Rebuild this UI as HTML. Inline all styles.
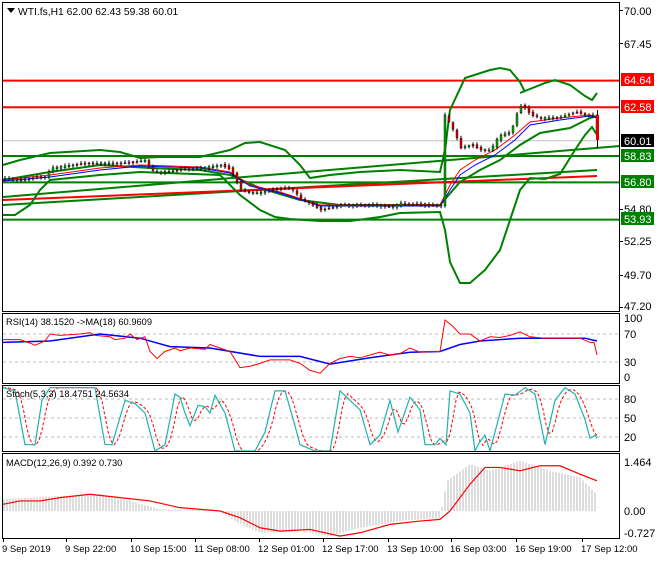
<!DOCTYPE html><html><head><meta charset="utf-8"><style>
body{margin:0;background:#fff;width:660px;height:560px;overflow:hidden;font-family:"Liberation Sans",sans-serif}
svg text{font-family:"Liberation Sans",sans-serif}
</style></head><body>
<svg id="s" width="660" height="560" xmlns="http://www.w3.org/2000/svg">
<rect width="660" height="560" fill="#fff"/>
<g id="g"></g>
<g fill="none" stroke="#000" stroke-width="1">
<rect x="2.5" y="2.5" width="617" height="309"/>
<rect x="2.5" y="313.5" width="617" height="70"/>
<rect x="2.5" y="385.5" width="617" height="66"/>
<rect x="2.5" y="453.5" width="617" height="85"/>
</g>
<path d="M7 8h8l-4 5z" fill="#000"/>
<text x="18" y="15" font-size="10.3" fill="#000">WTI.fs,H1  62.00 62.43 59.38 60.01</text>
<text x="6" y="325" font-size="9.3" fill="#000">RSI(14) 38.1520  -&gt;MA(18) 60.9609</text>
<text x="6" y="397" font-size="9.3" fill="#000">Stoch(5,3,3) 18.4751 24.5634</text>
<text x="6" y="466" font-size="9.3" fill="#000">MACD(12,26,9) 0.392 0.730</text>
<g font-size="11" fill="#000">
<text x="624" y="15">70.00</text><text x="624" y="48">67.45</text>
<text x="624" y="213">54.80</text><text x="624" y="245">52.25</text>
<text x="624" y="279">49.70</text><text x="624" y="310">47.20</text>
<text x="624" y="322">100</text><text x="624" y="338">70</text><text x="624" y="366">30</text><text x="624" y="381">0</text>
<text x="624" y="403">80</text><text x="624" y="422">50</text><text x="624" y="441">20</text>
<text x="624" y="466">1.464</text><text x="624" y="515">0.00</text><text x="624" y="537">-0.727</text>
</g>
<g fill="#000"><rect x="620" y="10" width="3" height="1"/><rect x="620" y="43" width="3" height="1"/><rect x="620" y="209" width="3" height="1"/><rect x="620" y="241" width="3" height="1"/><rect x="620" y="275" width="3" height="1"/><rect x="620" y="307" width="3" height="1"/></g>
<g font-size="11">
<rect x="621" y="73" width="33" height="13" fill="#f00"/><text x="624" y="84" fill="#fff">64.64</text>
<rect x="621" y="100" width="33" height="13" fill="#f00"/><text x="624" y="111" fill="#fff">62.58</text>
<rect x="621" y="134" width="33" height="13" fill="#000"/><text x="624" y="145" fill="#fff">60.01</text>
<rect x="621" y="149" width="33" height="13" fill="#008000"/><text x="624" y="160" fill="#fff">58.83</text>
<rect x="621" y="175" width="33" height="13" fill="#008000"/><text x="624" y="186" fill="#fff">56.80</text>
<rect x="621" y="212" width="33" height="13" fill="#008000"/><text x="624" y="223" fill="#fff">53.93</text>
</g>
<g font-size="9.5" fill="#000">
<text x="2" y="552">9 Sep 2019</text><text x="65" y="552">9 Sep 22:00</text><text x="130" y="552">10 Sep 15:00</text>
<text x="194" y="552">11 Sep 08:00</text><text x="258" y="552">12 Sep 01:00</text><text x="322" y="552">12 Sep 17:00</text>
<text x="387" y="552">13 Sep 10:00</text><text x="450" y="552">16 Sep 03:00</text><text x="515" y="552">16 Sep 19:00</text><text x="581" y="552">17 Sep 12:00</text>
</g>
<g fill="#000"><rect x="3" y="539" width="1" height="3"/><rect x="66" y="539" width="1" height="3"/><rect x="131" y="539" width="1" height="3"/><rect x="195" y="539" width="1" height="3"/><rect x="259" y="539" width="1" height="3"/><rect x="323" y="539" width="1" height="3"/><rect x="388" y="539" width="1" height="3"/><rect x="451" y="539" width="1" height="3"/><rect x="516" y="539" width="1" height="3"/><rect x="582" y="539" width="1" height="3"/></g>
</svg>
<script>
var g=document.getElementById('g'),NS='http://www.w3.org/2000/svg';
function el(t,a){var e=document.createElementNS(NS,t);for(var k in a)e.setAttribute(k,a[k]);g.appendChild(e);return e}
function P(pts,c,w,extra){var a={points:pts.map(function(p){return p[0]+','+p[1]}).join(' '),fill:'none',stroke:c,'stroke-width':w||1};for(var k in extra)a[k]=extra[k];el('polyline',a)}
function pr(a){var r=[];for(var i=0;i<a.length;i+=2)r.push([a[i],a[i+1]]);return r}
function interp(pts,x){for(var i=1;i<pts.length;i++){if(x<=pts[i][0]){var a=pts[i-1],b=pts[i];return a[1]+(b[1]-a[1])*(x-a[0])/(b[0]-a[0]||1)}}return pts[pts.length-1][1]}
function H(y,c,w){el('line',{x1:3,x2:620,y1:y,y2:y,stroke:c,'stroke-width':w})}
H(140.7,'#c0c0c0',1);H(80.6,'#f00',2);H(107.3,'#f00',2);
H(156,'#008000',2);H(182.4,'#008000',2);H(219.6,'#008000',2);
el('line',{x1:3,y1:197,x2:620,y2:146,stroke:'#008000','stroke-width':2});
el('line',{x1:3,y1:205,x2:597,y2:170,stroke:'#008000','stroke-width':2});
el('line',{x1:3,y1:200,x2:597,y2:176,stroke:'#f00','stroke-width':2});
var up=pr([3,165,20,160,50,153,100,150,120,152,140,158,160,157,200,157,230,150,245,143,260,142,285,150,300,165,310,178,330,175,360,172,400,170,440,172,445,150,450,110,465,78,490,70,500,68,510,70,520,82,525,92]);
P(up,'#008000',2);
P(pr([520,93,545,83,555,80,570,85,585,96,592,100,597,93]),'#008000',2);
var lo=pr([3,215,15,215,30,205,40,190,50,180,100,175,140,172,220,175,240,195,260,210,275,217,290,219,320,221,350,221,380,217,400,213,440,212,445,230,450,262,460,283,470,283,485,270,500,250,510,220,520,190,530,178,545,179,560,174,575,150,585,135,592,127,597,135]);
P(lo,'#008000',2);
P(pr([3,180,50,172,100,165,150,168,200,170,230,175,260,188,300,200,340,205,400,205,440,205,460,182,480,170,500,160,520,145,540,133,570,128,590,118,597,116]),'#008000',2);
var px=pr([3,178,20,180,45,177,50,168,70,165,100,163,130,163,145,160,150,170,160,172,200,168,220,165,230,170,240,190,255,193,270,190,290,188,300,198,320,210,330,208,340,205,360,205,390,207,400,203,430,206,440,205,444,115,450,125,457,140,460,148,470,145,480,150,490,150,495,140,500,135,510,132,518,108,522,105,530,115,540,118,560,117,575,112,585,115,594,115,597,140]);
P(pr([3,180,50,175,100,168,140,165,200,167,230,172,250,185,280,192,320,205,360,205,440,205,450,185,460,170,475,160,495,150,515,135,530,122,560,118,590,115,597,117]),'#f00',1);
P(pr([3,181,50,177,100,170,140,166,200,168,230,173,250,186,280,193,320,206,360,206,440,206,450,190,460,175,475,165,495,155,515,140,530,125,560,120,590,116,597,118]),'#00f',1);
for(var x=4;x<=596;x+=4){var c=interp(px,x),o=interp(px,x-4)+(Math.sin(x*1.7)*1.2);var t=Math.min(o,c),b=Math.max(o,c);
el('line',{x1:x+1,x2:x+1,y1:t-1-Math.abs(Math.sin(x))*1.5,y2:b+1+Math.abs(Math.cos(x))*1.5,stroke:'#000','stroke-width':1});
el('rect',{x:x,y:t,width:2,height:Math.max(1,b-t),fill:c>o?'#d00':'#0a0',stroke:'#000','stroke-width':0.4});}
el('line',{x1:597.5,x2:597.5,y1:110,y2:148,stroke:'#000'});el('rect',{x:596,y:115,width:3,height:25,fill:'#d00'});
function ry(v){return 383-0.7*v}
el('line',{x1:3,x2:620,y1:334,y2:334,stroke:'#bbb','stroke-dasharray':'3,3'});
el('line',{x1:3,x2:620,y1:362,y2:362,stroke:'#bbb','stroke-dasharray':'3,3'});
function mp(a,f){return pr(a).map(function(p){return [p[0],f(p[1])]})}
P(mp([3,58,50,60,100,70,140,64,170,52,210,50,260,38,300,38,330,27,370,36,410,44,440,45,460,55,480,60,520,64,585,64,597,60],ry),'#00f',1.5);
P(mp([3,62,20,62,30,57,35,54,45,60,50,70,60,68,80,70,90,72,95,68,110,66,115,62,125,64,130,70,137,62,145,66,150,45,157,35,165,45,175,50,180,46,190,50,205,48,210,55,220,50,230,45,240,22,250,24,260,28,270,33,290,33,300,28,310,18,320,14,330,28,340,35,350,38,360,36,370,40,380,44,390,40,400,42,410,50,420,44,430,45,440,45,445,90,452,82,460,70,470,70,480,60,490,66,500,65,510,68,520,73,530,66,545,64,560,64,580,64,590,58,594,58,597,40],ry),'#f00',1);
function sy(v){return 451-0.633*v}
[399,418,437].forEach(function(y){el('line',{x1:3,x2:620,y1:y,y2:y,stroke:'#bbb','stroke-dasharray':'3,3'})});
var K=[3,100,15,95,25,10,35,10,42,80,50,100,70,100,95,100,105,10,112,10,125,80,135,75,145,60,155,0,165,10,175,90,180,85,185,60,190,40,198,72,205,70,210,60,215,88,225,60,235,0,255,0,265,30,275,95,285,95,295,40,300,10,315,0,330,0,340,95,350,80,360,65,370,10,380,25,390,80,398,30,410,85,420,65,425,10,435,10,440,20,446,10,450,95,460,90,470,60,475,0,480,15,485,25,490,0,505,90,515,88,525,100,535,90,545,10,555,80,565,100,575,90,585,50,590,20,595,25,597,20];
var kp=pr(K);var D=[];for(var x=3;x<=597;x+=3){var v=(interp(kp,x-2)+interp(kp,x-5)+interp(kp,x-8))/3;D.push([x,sy(Math.max(0,Math.min(100,v)))])}
P(D,'#f00',1,{'stroke-dasharray':'3,2'});
P(mp(K,sy),'#20b2aa',1.2);
function my(v){return 511-33.5*v}
var hist=pr([3,0.35,60,0.45,100,0.5,130,0.3,160,0.05,220,0.02,235,-0.3,260,-0.65,300,-0.6,330,-0.75,360,-0.5,400,-0.3,440,-0.2,447,0.9,470,1.4,490,1.2,520,1.5,550,1.2,580,1.0,597,0.5]);
for(var x=4;x<=597;x+=3){var v=interp(hist,x);el('line',{x1:x,x2:x,y1:my(0),y2:my(v),stroke:'#bbb','stroke-width':1})}
P(mp([3,0.2,20,0.3,40,0.3,60,0.4,90,0.5,120,0.4,150,0.3,180,0.1,220,0.0,240,-0.2,260,-0.5,280,-0.6,310,-0.55,340,-0.75,360,-0.65,390,-0.4,420,-0.3,440,-0.25,450,0,470,0.8,485,1.3,500,1.3,520,1.2,540,1.35,560,1.35,580,1.1,597,0.9],my),'#f00',1.2);
</script>
</body></html>
